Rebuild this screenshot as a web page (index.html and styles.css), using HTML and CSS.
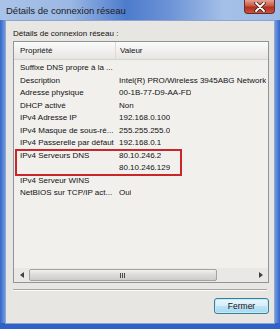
FILE: index.html
```html
<!DOCTYPE html>
<html lang="fr">
<head>
    <meta charset="UTF-8">
    <title>Détails de connexion réseau</title>
    <link rel="stylesheet" href="styles.css">
</head>
<body>
    <div class="window">
        <div class="titlebar">
            <span class="title">Détails de connexion réseau</span>
            <div class="close-button">
                <svg width="12" height="10" viewBox="0 0 12 10">
                    <path d="M2 1 L10 9 M10 1 L2 9" stroke="#3a1a18" stroke-width="3.4" stroke-linecap="round"/>
                    <path d="M2 1 L10 9 M10 1 L2 9" stroke="#ffffff" stroke-width="1.8" stroke-linecap="round"/>
                </svg>
            </div>
        </div>
        <div class="client">
            <div class="caption">Détails de connexion réseau :</div>
            <div class="listbox">
                <div class="list-head">
                    <div class="col-prop">Propriété</div>
                    <div class="col-val">Valeur</div>
                </div>
                <div class="list-body">
                    <div class="row"><span class="prop">Suffixe DNS propre à la ...</span><span class="val"></span></div>
                    <div class="row"><span class="prop">Description</span><span class="val">Intel(R) PRO/Wireless 3945ABG Network</span></div>
                    <div class="row"><span class="prop">Adresse physique</span><span class="val">00-1B-77-D9-AA-FD</span></div>
                    <div class="row"><span class="prop">DHCP activé</span><span class="val">Non</span></div>
                    <div class="row"><span class="prop">IPv4 Adresse IP</span><span class="val">192.168.0.100</span></div>
                    <div class="row"><span class="prop">IPv4 Masque de sous-ré...</span><span class="val">255.255.255.0</span></div>
                    <div class="row"><span class="prop">IPv4 Passerelle par défaut</span><span class="val">192.168.0.1</span></div>
                    <div class="marked">
                        <div class="row"><span class="prop">IPv4 Serveurs DNS</span><span class="val">80.10.246.2</span></div>
                        <div class="row"><span class="prop"></span><span class="val">80.10.246.129</span></div>
                    </div>
                    <div class="row"><span class="prop">IPv4 Serveur WINS</span><span class="val"></span></div>
                    <div class="row"><span class="prop">NetBIOS sur TCP/IP act...</span><span class="val">Oui</span></div>
                </div>
                <div class="hscroll">
                    <div class="arrow">
                        <svg width="4" height="6" viewBox="0 0 4 6"><path d="M4 0 L0 3 L4 6 Z" fill="#404040"/></svg>
                    </div>
                    <div class="thumb">
                        <div class="grip"></div>
                    </div>
                    <div class="track"></div>
                    <div class="arrow">
                        <svg width="4" height="6" viewBox="0 0 4 6"><path d="M0 0 L4 3 L0 6 Z" fill="#404040"/></svg>
                    </div>
                </div>
            </div>
            <div class="separator"></div>
            <div class="buttons">
                <div class="button">Fermer</div>
            </div>
        </div>
    </div>
</body>
</html>
```

FILE: styles.css
```css
body {
    margin: 0;
    font-family: "Liberation Sans", Arial, sans-serif;
    color: #111;
}
.window {
    width: 280px;
    height: 329px;
    box-sizing: border-box;
    padding: 0 5px 6px 5px;
    display: flex;
    flex-direction: column;
    background: linear-gradient(90deg, #3366c8 0px, #6f98dc 5px, #8fb2e4 50%, #6f98dc 275px, #3366c8 280px);
    box-shadow: inset 0 -6px 0 #2f62c9;
}
.titlebar {
    height: 20px;
    display: flex;
    justify-content: space-between;
    align-items: flex-start;
    margin: 0 -5px;
    padding: 0 3px 0 6px;
    background: linear-gradient(90deg, #a9c3e8 0%, #9bb8e4 25%, #4d7bcc 45%, #6b92d6 60%, #a4c0e8 80%, #9ebbe6 100%);
}
.title {
    font-size: 9.5px;
    line-height: 21px;
    color: #1c1c1c;
}
.close-button {
    width: 31px;
    height: 14px;
    margin-right: 2px;
    display: flex;
    align-items: center;
    justify-content: center;
    border: 1px solid #6b2a26;
    border-top: none;
    border-radius: 0 0 4px 4px;
    background: linear-gradient(#e6a08f, #c65a47 45%, #b0301e 55%, #c8543c);
    box-sizing: border-box;
}
.client {
    flex: 1;
    display: flex;
    flex-direction: column;
    background: #e8e6e2;
    border: 1px solid #8ea6cf;
    padding: 7px 5px 9px 7px;
}
.caption {
    font-size: 8px;
    line-height: 12px;
    margin-bottom: 1px;
}
.listbox {
    height: 242px;
    box-sizing: border-box;
    border: 1px solid #8e949c;
    background: #f1f0ed;
    display: flex;
    flex-direction: column;
    font-size: 8px;
}
.list-head {
    height: 17px;
    display: flex;
    align-items: center;
    background: linear-gradient(#fbfbfa, #efeeec 60%, #e6e5e2);
    border-bottom: 1px solid #d5d4d0;
}
.col-prop {
    width: 95px;
    padding-left: 6px;
    border-right: 1px solid #dcdbd7;
    line-height: 17px;
}
.col-val {
    padding-left: 4px;
}
.list-body {
    flex: 1;
    padding-top: 2px;
}
.row {
    display: flex;
    height: 12.5px;
    line-height: 12.5px;
    white-space: nowrap;
}
.prop {
    width: 99px;
    padding-left: 6px;
    flex-shrink: 0;
}
.val {
    overflow: hidden;
}
.marked {
    position: relative;
}
.marked::after {
    content: "";
    position: absolute;
    left: 1px;
    top: -1px;
    width: 163px;
    bottom: -1px;
    border: 2px solid #c8262b;
}
.hscroll {
    height: 14px;
    display: flex;
    background: #e9e8e5;
}
.arrow {
    width: 15px;
    display: flex;
    align-items: center;
    justify-content: center;
}
.thumb {
    width: 186px;
    margin: 1px 0;
    border: 1px solid #a4a29e;
    border-radius: 2px;
    background: linear-gradient(#f2f1ef, #dcdad6 50%, #cfcdc9);
    display: flex;
    align-items: center;
    justify-content: center;
}
.grip {
    width: 6px;
    height: 5px;
    background: repeating-linear-gradient(90deg, #4a4a4a 0 1px, transparent 1px 2px);
}
.track {
    flex: 1;
}
.separator {
    margin-top: 6px;
    height: 0;
    border-top: 1px solid #a8a6a2;
    border-bottom: 1px solid #fbfbfa;
    margin-right: 2px;
}
.buttons {
    margin-top: 7px;
    display: flex;
    justify-content: flex-end;
}
.button {
    width: 55px;
    height: 16px;
    box-sizing: border-box;
    border: 1px solid #3a7e9c;
    border-radius: 3px;
    background: linear-gradient(#eaf6fc, #d6eef9 50%, #bde3f4 51%, #a9d9ef);
    box-shadow: inset 0 0 0 1px #c2ebf8;
    font-size: 8.5px;
    line-height: 14px;
    text-align: center;
    color: #111;
}
```
